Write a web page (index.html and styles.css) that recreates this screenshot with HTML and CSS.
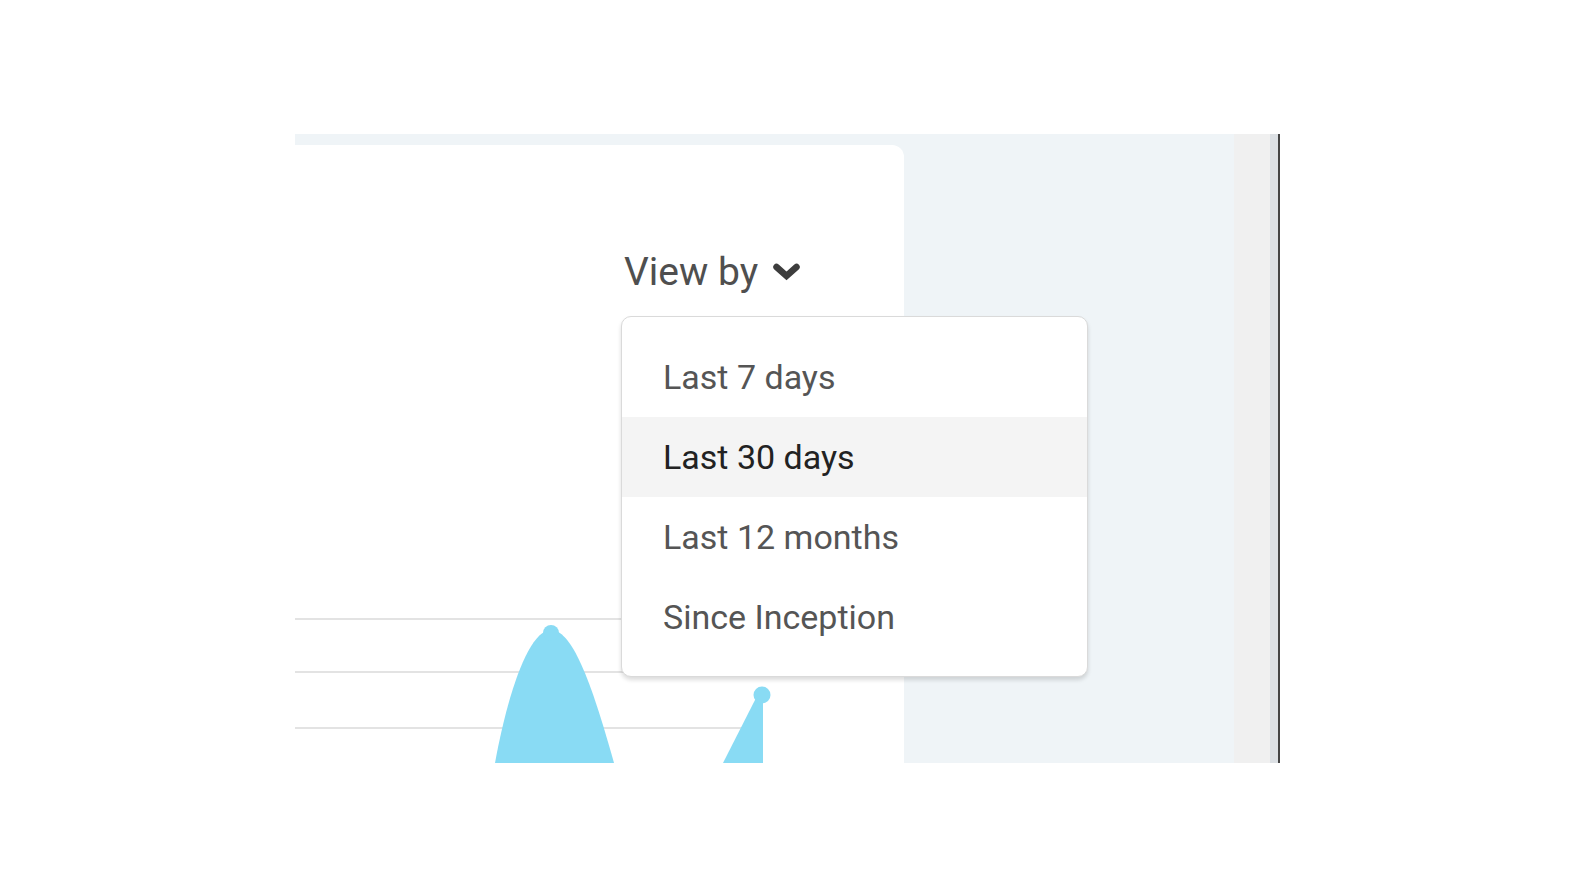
FILE: index.html
```html
<!DOCTYPE html>
<html lang="en">
<head>
<meta charset="utf-8">
<title>View by</title>
<link rel="stylesheet" href="styles.css">
</head>
<body>
<div class="frame">
  <div class="main">
    <div class="card">
      <div class="card-head">
        <button class="viewby" type="button">
          <span class="viewby-label">View by</span>
          <svg class="chev" width="27" height="18" viewBox="0 0 27 18" aria-hidden="true">
            <path d="M3.5 4 L13.5 13 L23.5 4" fill="none" stroke="#3d3d3d" stroke-width="6.5" stroke-linejoin="miter" stroke-linecap="round"/>
          </svg>
        </button>
      </div>
      <ul class="menu">
        <li class="menu-item">Last 7 days</li>
        <li class="menu-item is-active">Last 30 days</li>
        <li class="menu-item">Last 12 months</li>
        <li class="menu-item">Since Inception</li>
      </ul>
      <svg class="chart" width="609" height="163" viewBox="0 0 609 163" aria-hidden="true">
        <line x1="0" y1="19" x2="468" y2="19" stroke="#e3e3e3" stroke-width="2"/>
        <line x1="0" y1="72" x2="468" y2="72" stroke="#e3e3e3" stroke-width="2"/>
        <line x1="0" y1="128" x2="468" y2="128" stroke="#e3e3e3" stroke-width="2"/>
        <path d="M200 163 C 213 92 234 30 256 30 C 279 30 299 92 319 163 Z" fill="#89dbf4"/>
        <circle cx="256" cy="33" r="8" fill="#89dbf4"/>
        <path d="M428 163 L461 98 L468 95 L468 163 Z" fill="#89dbf4"/>
        <circle cx="467" cy="95" r="8.5" fill="#89dbf4"/>
      </svg>
    </div>
  </div>
  <div class="side"></div>
  <div class="side-rail"></div>
  <div class="side-edge"></div>
</div>
</body>
</html>
```

FILE: styles.css
```css
html, body {
  margin: 0;
  padding: 0;
  background: #ffffff;
}

body {
  font-family: Roboto, "Noto Sans", "Liberation Sans", sans-serif;
}

.frame {
  margin: 134px 0 0 295px;
  width: 985px;
  height: 629px;
  display: flex;
}

.main {
  width: 939px;
  flex: none;
  background: #eff4f7;
  padding-top: 11px;
  box-sizing: border-box;
}

.card {
  position: relative;
  width: 609px;
  height: 618px;
  background: #ffffff;
  border-top-right-radius: 12px;
  display: flex;
  flex-direction: column;
}

.card-head {
  margin-top: 104px;
  padding-left: 329px;
}

.viewby {
  display: inline-flex;
  align-items: center;
  gap: 15px;
  background: none;
  border: 0;
  padding: 0;
  margin: 0;
  font: inherit;
  cursor: pointer;
}

.viewby-label {
  font-size: 39px;
  line-height: normal;
  color: #4f4f4f;
}

.chev {
  display: block;
}

.menu {
  position: absolute;
  left: 326px;
  top: 171px;
  width: 467px;
  box-sizing: border-box;
  margin: 0;
  padding: 20px 0 19px;
  list-style: none;
  background: #ffffff;
  border: 1px solid #dadada;
  border-radius: 10px;
  box-shadow: 0 3px 4px rgba(0, 0, 0, 0.14);
  z-index: 2;
}

.menu-item {
  height: 80px;
  display: flex;
  align-items: center;
  padding-left: 41px;
  font-size: 34px;
  color: #555555;
}

.menu-item.is-active {
  background: #f4f4f4;
  color: #222222;
}

.chart {
  display: block;
  margin-top: auto;
}

.side {
  width: 36px;
  flex: none;
  background: #f0f0f0;
}

.side-rail {
  width: 8px;
  flex: none;
  background: #dce0e4;
}

.side-edge {
  width: 2px;
  flex: none;
  background: #444444;
}
```
